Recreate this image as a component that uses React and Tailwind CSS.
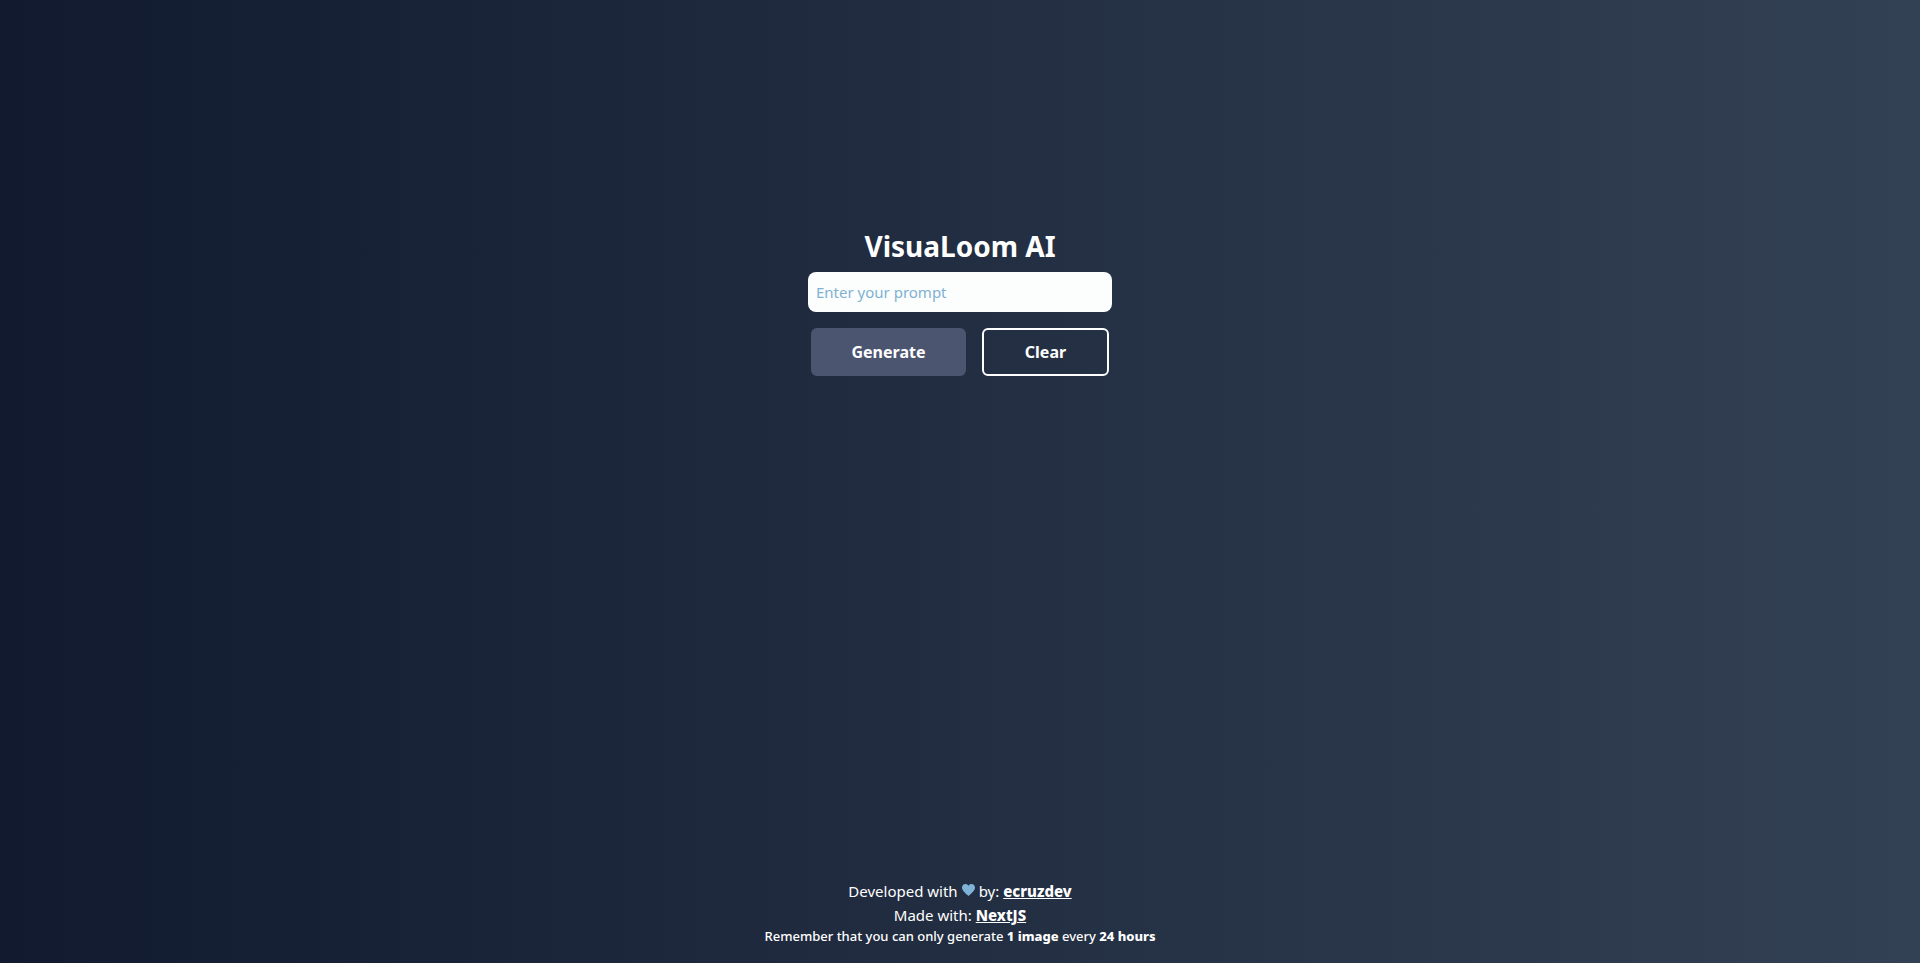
export default function App() {
  return (
    <div className="min-h-screen bg-[linear-gradient(to_right,#111a2e,#334155)] flex flex-col items-center justify-between font-['Noto_Sans',sans-serif] text-white">
      {/* ===== FORM ===== */}
      <main className="flex flex-col items-center w-[304px] pt-[228px]">
        <h1 className="text-[28px] leading-[36px] font-bold whitespace-nowrap">VisuaLoom AI</h1>
        <input
          placeholder="Enter your prompt"
          className="mt-[8px] w-full h-[40px] rounded-lg bg-[#fcfefe] px-2 text-[15px] text-gray-800 placeholder:text-[#7fb2d2] outline-none"
        />
        <div className="mt-4 flex gap-4 w-[298px]">
          <button className="w-[155px] h-[48px] rounded-md bg-[#4b5570] text-[16px] font-bold">Generate</button>
          <button className="w-[127px] h-[48px] rounded-md border-2 border-white text-[16px] font-bold">Clear</button>
        </div>
      </main>

      {/* ===== FOOTER ===== */}
      <footer className="pb-[18px] flex flex-col items-center">
        <p className="text-[15px] leading-[24px] flex items-center gap-1">
          Developed with
          <svg width="13" height="12" viewBox="0 0 24 22" fill="#7fb2d9" className="-mt-0.5">
            <path d="M12 22 C5 16 0 12 0 6.5 C0 2.8 2.8 0 6.5 0 C8.6 0 10.8 1 12 3 C13.2 1 15.4 0 17.5 0 C21.2 0 24 2.8 24 6.5 C24 12 19 16 12 22 Z" />
          </svg>
          by: <a href="#" className="font-extrabold underline">ecruzdev</a>
        </p>
        <p className="text-[15px] leading-[24px]">
          Made with: <a href="#" className="font-extrabold underline">NextJS</a>
        </p>
        <p className="text-[13px] leading-[18px] font-medium whitespace-nowrap">
          Remember that you can only generate <b className="font-extrabold">1 image</b> every <b className="font-extrabold">24 hours</b>
        </p>
      </footer>
    </div>
  );
}
